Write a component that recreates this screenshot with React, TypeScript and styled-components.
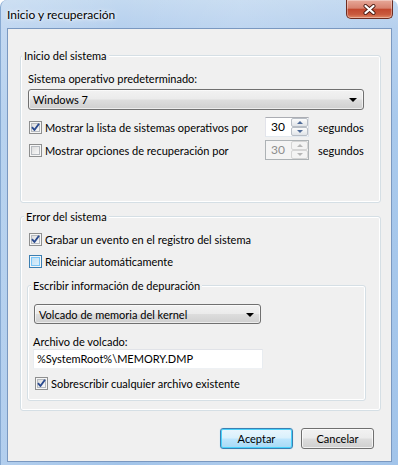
import React from 'react';
import styled, { createGlobalStyle } from 'styled-components';

/**
 * Inicio y recuperación - Windows 7 style dialog
 */

const GlobalStyle = createGlobalStyle`
  html, body {
    margin: 0;
    padding: 0;
    background: #ffffff;
  }
  body {
    font-family: Lato, "Open Sans", "Liberation Sans", sans-serif;
    font-size: 11px;
    color: #000000;
  }
  * {
    box-sizing: border-box;
  }
`;

/* ---------- small parts ---------- */

const CheckBox: React.FC<{ checked?: boolean; hot?: boolean }> = ({ checked, hot }) => (
  <Box $hot={hot}>
    {checked && (
      <svg width="11" height="11" viewBox="0 0 11 11">
        <path d="M2 5.2 L4.4 8 L9 1.8" fill="none" stroke="#2a4a8f" strokeWidth="1.9" strokeLinejoin="round" />
      </svg>
    )}
  </Box>
);

const Spinner: React.FC<{ value: string; disabled?: boolean }> = ({ value, disabled }) => (
  <SpinBox $disabled={disabled}>
    <SpinText $disabled={disabled}>{value}</SpinText>
    <SpinButtons>
      <SpinButton $disabled={disabled}>
        <Arrow $up $disabled={disabled} />
      </SpinButton>
      <SpinButton $disabled={disabled}>
        <Arrow $disabled={disabled} />
      </SpinButton>
    </SpinButtons>
  </SpinBox>
);

/* ---------- main ---------- */

const App: React.FC = () => {
  return (
    <>
      <GlobalStyle />
      <Window>
        <TitleBar>
          <Title>Inicio y recuperación</Title>
          <CloseButton title="Cerrar">
            <svg width="13" height="11" viewBox="0 0 13 11">
              <path d="M2.5 2 L10.5 9 M10.5 2 L2.5 9" stroke="#4a1b12" strokeWidth="4" strokeLinecap="round" />
              <path d="M2.5 2 L10.5 9 M10.5 2 L2.5 9" stroke="#ffffff" strokeWidth="2.3" strokeLinecap="round" />
            </svg>
          </CloseButton>
        </TitleBar>

        <Client>
          {/* Inicio del sistema */}
          <GroupBox $height={148}>
            <Legend $offset={-6}>Inicio del sistema</Legend>
            <Label $top={8}>Sistema operativo predeterminado:</Label>
            <Combo $width={336} $top={3} $height={21}>
              <span>Windows 7</span>
              <ComboArrow />
            </Combo>
            <SpinRow $top={7}>
              <CheckLine>
                <CheckBox checked />
                <span>Mostrar la lista de sistemas operativos por</span>
              </CheckLine>
              <Spinner value="30" />
              <span>segundos</span>
            </SpinRow>
            <SpinRow $top={3}>
              <CheckLine>
                <CheckBox />
                <span>Mostrar opciones de recuperación por</span>
              </CheckLine>
              <Spinner value="30" disabled />
              <span>segundos</span>
            </SpinRow>
          </GroupBox>

          {/* Error del sistema */}
          <GroupBox $height={195} $top={13}>
            <Legend $offset={-4}>Error del sistema</Legend>
            <CheckRow $top={7}>
              <CheckBox checked />
              <span>Grabar un evento en el registro del sistema</span>
            </CheckRow>
            <CheckRow $top={5}>
              <CheckBox hot />
              <span>Reiniciar automáticamente</span>
            </CheckRow>

            <InnerGroup>
              <Legend $offset={-2}>Escribir información de depuración</Legend>
              <Combo $width={227} $top={11} $height={20} $indent={1}>
                <span>Volcado de memoria del kernel</span>
                <ComboArrow />
              </Combo>
              <Label $top={11} $lh={14}>Archivo de volcado:</Label>
              <Edit>%SystemRoot%\MEMORY.DMP</Edit>
              <CheckRow $top={6} $indent={1}>
                <CheckBox checked />
                <span>Sobrescribir cualquier archivo existente</span>
              </CheckRow>
            </InnerGroup>
          </GroupBox>

          <ButtonRow>
            <PushButton $default>Aceptar</PushButton>
            <PushButton>Cancelar</PushButton>
          </ButtonRow>
        </Client>
      </Window>
    </>
  );
};

/* ===================== styled components ===================== */

const Window = styled.div`
  width: 398px;
  height: 465px;
  display: flex;
  flex-direction: column;
  border-radius: 7px 7px 0 0;
  overflow: hidden;
  border-left: 1px solid #86a9d2;
  background:
    linear-gradient(90deg, rgba(255, 255, 255, 0.18) 0%, rgba(255, 255, 255, 0) 30%, rgba(255, 255, 255, 0.12) 60%, rgba(255, 255, 255, 0) 100%),
    linear-gradient(180deg, #c3d9f0 0%, #b6d0ee 28px, #a9c9ec 120px, #a2c4ea 100%);
`;

const TitleBar = styled.div`
  height: 28px;
  flex-shrink: 0;
  display: flex;
  justify-content: space-between;
  align-items: flex-start;
  padding: 0 5px 0 6px;
`;

const Title = styled.span`
  margin-top: 7px;
  line-height: 16px;
  font-size: 12px;
  color: #000000;
  text-shadow: 0 0 6px #ffffff, 0 0 3px #ffffff;
`;

const CloseButton = styled.div`
  width: 47px;
  height: 19px;
  display: flex;
  align-items: center;
  justify-content: center;
  border: 1px solid #6e2c20;
  border-top: none;
  border-radius: 0 0 5px 5px;
  background: linear-gradient(180deg, #e7a899 0%, #d7826f 45%, #c2482f 52%, #c95a3e 80%, #e28a67 100%);
  box-shadow: inset 0 0 0 1px rgba(255, 255, 255, 0.35);
`;

const Client = styled.div`
  flex: 1;
  margin: 0 6px 3px 6px;
  border: 1px solid #7a98c0;
  background: #f0f0f0;
  display: flex;
  flex-direction: column;
  padding: 26px 10px 0 12px;
`;

const GroupBox = styled.div<{ $height: number; $top?: number }>`
  height: ${p => p.$height}px;
  margin-top: ${p => p.$top ?? 0}px;
  border: 1px solid #d5dfe5;
  border-radius: 3px;
  box-shadow: inset 0 0 0 1px #ffffff;
  padding: 0 0 0 7px;
  display: flex;
  flex-direction: column;
  align-items: flex-start;
`;

const InnerGroup = styled.div`
  align-self: stretch;
  height: 116px;
  margin: 15px 14px 0 -1px;
  border: 1px solid #d5dfe5;
  border-radius: 3px;
  box-shadow: inset 0 0 0 1px #ffffff;
  padding: 0 0 0 5px;
  display: flex;
  flex-direction: column;
  align-items: flex-start;
`;

const Legend = styled.span<{ $offset: number }>`
  display: block;
  margin: -8px 0 0 ${p => p.$offset}px;
  padding: 0 2px;
  height: 15px;
  line-height: 15px;
  background: #f0f0f0;
  white-space: nowrap;
`;

const Label = styled.div<{ $top: number; $lh?: number }>`
  margin-top: ${p => p.$top}px;
  line-height: ${p => p.$lh ?? 15}px;
  white-space: nowrap;
`;

const Combo = styled.div<{ $width: number; $top: number; $height: number; $indent?: number }>`
  width: ${p => p.$width}px;
  height: ${p => p.$height}px;
  margin: ${p => p.$top}px 0 0 ${p => p.$indent ?? 0}px;
  border: 1px solid #707070;
  border-radius: 3px;
  background: linear-gradient(180deg, #f2f2f2 0%, #ebebeb 48%, #dddddd 52%, #cfcfcf 100%);
  box-shadow: inset 0 0 0 1px rgba(255, 255, 255, 0.6);
  display: flex;
  align-items: center;
  justify-content: space-between;
  padding: 0 6px 0 4px;
  white-space: nowrap;
`;

const ComboArrow = styled.span`
  width: 0;
  height: 0;
  border-left: 4px solid transparent;
  border-right: 4px solid transparent;
  border-top: 4px solid #000000;
  margin-top: 1px;
`;

const SpinRow = styled.div<{ $top: number }>`
  margin-top: ${p => p.$top}px;
  height: 20px;
  display: grid;
  grid-template-columns: 228px 44px auto;
  column-gap: 9px;
  align-items: center;
  white-space: nowrap;
`;

const CheckLine = styled.div`
  display: flex;
  align-items: center;
  gap: 3px;
  padding-left: 1px;
`;

const CheckRow = styled.div<{ $top: number; $indent?: number }>`
  margin: ${p => p.$top}px 0 0 ${p => p.$indent ?? 0}px;
  height: 17px;
  display: flex;
  align-items: center;
  gap: 3px;
  padding-left: 1px;
  white-space: nowrap;
`;

const Box = styled.span<{ $hot?: boolean }>`
  width: 13px;
  height: 13px;
  flex-shrink: 0;
  display: flex;
  align-items: center;
  justify-content: center;
  border: 1px solid ${p => (p.$hot ? '#3c7fb1' : '#8e8f8f')};
  background: ${p =>
    p.$hot
      ? 'linear-gradient(135deg, #b9dcf2 0%, #e4f3fc 100%)'
      : 'linear-gradient(135deg, #d5d5d5 0%, #f4f4f4 70%, #fbfbfb 100%)'};
  box-shadow: inset 0 0 0 1px #f6f6f6, inset 0 0 0 2px ${p => (p.$hot ? '#79c6f9' : '#b6babf')};
`;

const SpinBox = styled.div<{ $disabled?: boolean }>`
  width: 44px;
  height: 20px;
  display: flex;
  border: 1px solid;
  border-color: ${p => (p.$disabled ? '#adb2b5' : '#abadb3 #dbdfe6 #e3e9ef #e2e3ea')};
  background: ${p => (p.$disabled ? '#f4f4f4' : '#ffffff')};
`;

const SpinText = styled.span<{ $disabled?: boolean }>`
  flex: 1;
  padding-left: 5px;
  line-height: 18px;
  font-size: 12px;
  color: ${p => (p.$disabled ? '#8d8d8d' : '#000000')};
`;

const SpinButtons = styled.div`
  width: 17px;
  display: flex;
  flex-direction: column;
`;

const SpinButton = styled.div<{ $disabled?: boolean }>`
  flex: 1;
  display: flex;
  align-items: center;
  justify-content: center;
  border: 1px solid ${p => (p.$disabled ? '#d5d5d5' : '#b8bec6')};
  border-radius: 2px;
  background: ${p =>
    p.$disabled ? '#f4f4f4' : 'linear-gradient(180deg, #fbfbfb 0%, #eef0f2 50%, #e0e3e7 100%)'};
`;

const Arrow = styled.span<{ $up?: boolean; $disabled?: boolean }>`
  width: 0;
  height: 0;
  border-left: 3px solid transparent;
  border-right: 3px solid transparent;
  ${p =>
    p.$up
      ? `border-bottom: 3px solid ${p.$disabled ? '#b7b7b7' : '#4f6b98'};`
      : `border-top: 3px solid ${p.$disabled ? '#b7b7b7' : '#4f6b98'};`}
`;

const Edit = styled.div`
  width: 230px;
  height: 20px;
  border: 1px solid;
  border-color: #e1e3e8 #e8ecf0 #eef1f4 #e8ecf0;
  background: #ffffff;
  padding-left: 3px;
  line-height: 18px;
  white-space: nowrap;
`;

const ButtonRow = styled.div`
  margin-top: 17px;
  margin-right: 7px;
  display: flex;
  justify-content: flex-end;
  gap: 8px;
`;

const PushButton = styled.button<{ $default?: boolean }>`
  width: 73px;
  height: 21px;
  padding: 0;
  font-family: inherit;
  font-size: 11px;
  color: #000000;
  border-radius: 3px;
  border: 1px solid ${p => (p.$default ? '#3c7fb1' : '#707070')};
  background: ${p =>
    p.$default
      ? 'linear-gradient(180deg, #eaf6fd 0%, #d9f0fc 48%, #bee6fd 52%, #a7d9f5 100%)'
      : 'linear-gradient(180deg, #f2f2f2 0%, #ebebeb 48%, #dddddd 52%, #cfcfcf 100%)'};
  box-shadow: ${p =>
    p.$default ? 'inset 0 0 0 1px #48d2fc, 0 0 1px #8fd3ff' : 'inset 0 0 0 1px rgba(255, 255, 255, 0.7)'};
`;

export default App;
